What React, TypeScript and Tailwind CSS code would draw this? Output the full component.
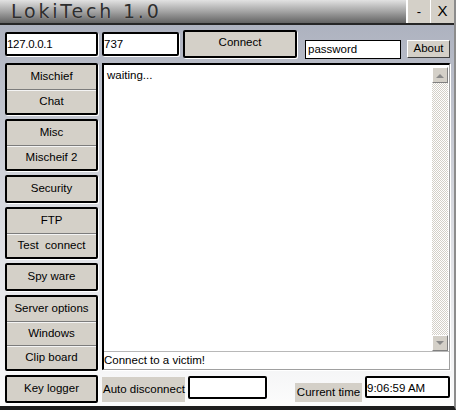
import React from 'react';

const groups: string[][] = [
  ['Mischief', 'Chat'],
  ['Misc', 'Mischeif 2'],
  ['Security'],
  ['FTP', 'Test  connect'],
  ['Spy ware'],
  ['Server options', 'Windows', 'Clip board'],
  ['Key logger'],
];

function SideGroup({ items }: { items: string[] }) {
  return (
    <div className="flex flex-col rounded-[2px] border-2 border-black shadow-[1px_1px_0_#ffffff]">
      {items.map((t, i) => (
        <div
          key={t}
          className={`flex h-[24px] items-center justify-center whitespace-pre bg-[#d4d0c8] text-[11.5px] text-black ${i > 0 ? 'border-t border-[#7c7c7c] shadow-[inset_0_1px_0_#f4f4f4]' : ''}`}
        >
          {t}
        </div>
      ))}
    </div>
  );
}

function Field({ value, className }: { value?: string; className?: string }) {
  return (
    <div
      className={`flex items-start overflow-hidden whitespace-nowrap rounded-[2px] border-2 border-black bg-white pt-[2px] text-[11.5px] leading-[16px] text-black shadow-[1px_1px_0_#ffffff] ${className || ''}`}
    >
      {value}
    </div>
  );
}

function ArrowBtn({ up }: { up?: boolean }) {
  return (
    <div className="flex h-[16px] w-[16px] items-center justify-center border border-t-white border-l-white border-r-[#808080] border-b-[#808080] bg-[#d4d0c8]">
      <svg width="8" height="5" viewBox="0 0 8 5">
        {up ? <path d="M0 5 L4 1 L8 5 Z" fill="#8a8a8a" /> : <path d="M0 0 L8 0 L4 4 Z" fill="#8a8a8a" />}
      </svg>
    </div>
  );
}

export default function App() {
  return (
    <div className="flex h-[410px] w-[456px] flex-col overflow-hidden border-b-4 border-r-2 border-b-[#1c1c1c] border-r-[#8c8c8c] bg-gradient-to-b from-[#a8adbb] via-[#d6d8de] to-[#fcfcfc] font-['Liberation_Sans',Arial,sans-serif]">
      {/* Title bar */}
      <div className="flex h-[25px] shrink-0 border-b-2 border-[#262626]">
        <div className="flex flex-1 items-center bg-gradient-to-b from-[#e2e2e2] via-[#a4a4a4] to-[#646464] pl-[11px]">
          <span className="font-['DejaVu_Sans',sans-serif] text-[19px] leading-none tracking-[2.8px] text-[#2e2e2e] [text-shadow:0_0_1px_#bdbdbd]">
            LokiTech 1.0
          </span>
        </div>
        <div className="flex h-[23px] w-[24px] items-center justify-center border-l-2 border-white bg-[#d4d0c8] text-[13px] text-black">-</div>
        <div className="flex h-[23px] w-[24px] items-center justify-center border-l border-white bg-[#d4d0c8] text-[15px] text-black">X</div>
      </div>

      {/* Connection row */}
      <div className="mt-[5px] flex items-start pl-[5px]">
        <Field value="127.0.0.1" className="mt-[2px] h-[24px] w-[93px] tracking-[-0.3px]" />
        <Field value="737" className="ml-[4px] mt-[2px] h-[24px] w-[77px]" />
        <div className="ml-[4px] flex h-[28px] w-[114px] items-center justify-center rounded-[2px] border-2 border-black bg-[#d4d0c8] pb-[2px] text-[11.5px] text-black shadow-[1px_1px_0_#ffffff]">
          Connect
        </div>
        <div className="ml-[8px] mt-[10px] flex h-[19px] w-[96px] items-center border border-black bg-white pl-[2px] text-[11.5px] text-black">
          password
        </div>
        <div className="ml-[6px] mt-[10px] flex h-[18px] w-[43px] items-center justify-center border border-t-white border-l-white border-r-[#404040] border-b-[#404040] bg-[#d4d0c8] text-[11.5px] text-black">
          About
        </div>
      </div>

      {/* Body */}
      <div className="mt-[4px] flex pl-[5px]">
        <div className="flex w-[93px] flex-col gap-[4px]">
          {groups.map((g) => (
            <SideGroup key={g[0]} items={g} />
          ))}
        </div>

        <div className="ml-[4px] flex w-[348px] flex-col">
          <div className="flex h-[307px] flex-col border-l-2 border-t-2 border-r border-b border-l-black border-t-black border-r-[#a0a0a0] border-b-[#a0a0a0] shadow-[1px_1px_0_#ffffff]">
            <div className="flex flex-1 bg-white">
              <div className="flex-1 px-[3px] pt-[3px] text-[11.5px] leading-[14px] text-black">waiting...</div>
              <div className="mr-[1px] mt-[2px] flex w-[16px] flex-col">
                <ArrowBtn up />
                <div className="flex-1 bg-[repeating-conic-gradient(#d4d0c8_0%_25%,#ffffff_0%_50%)] bg-[length:2px_2px]" />
                <ArrowBtn />
              </div>
            </div>
            <div className="flex h-[18px] items-center border-t border-[#b8b8b8] bg-white text-[11.5px] text-black">
              Connect to a victim!
            </div>
          </div>

          {/* Bottom row */}
          <div className="mt-[6px] flex items-start">
            <div className="mt-[1px] flex h-[25px] w-[83px] items-center whitespace-nowrap bg-[#d4d0c8] pl-[1px] pt-[1px] text-[11.5px] text-black">
              Auto disconnect
            </div>
            <Field className="ml-[3px] h-[23px] w-[79px]" />
            <div className="ml-[28px] mt-[7px] flex h-[19px] w-[67px] items-center justify-center whitespace-nowrap bg-[#d4d0c8] text-[11.5px] text-black">
              Current time
            </div>
            <Field value="9:06:59 AM" className="ml-[3px] h-[22px] w-[85px]" />
          </div>
        </div>
      </div>
    </div>
  );
}
